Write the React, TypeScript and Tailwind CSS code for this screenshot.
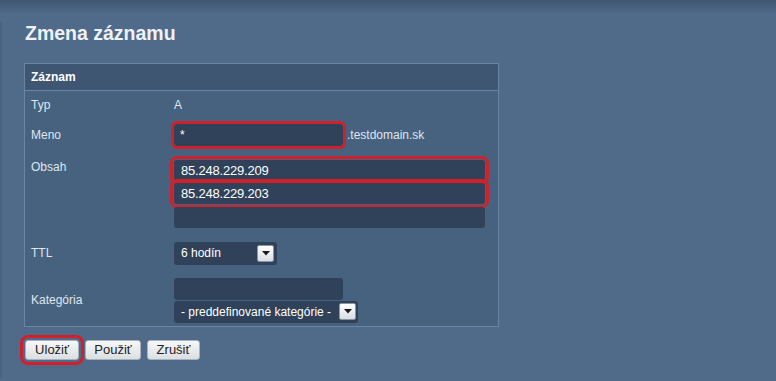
const field = "bg-[#2f4259] text-white rounded-[3px]";

const Arrow = () => {
  return (
    <span className="flex h-[17px] w-[17px] items-center justify-center rounded-[2px] border border-[#8a96a4] bg-gradient-to-b from-[#ffffff] to-[#d9dde2]">
      <svg width="8" height="5" viewBox="0 0 8 5">
        <path d="M0 0 L8 0 L4 4.5 Z" fill="#1b1b1b" />
      </svg>
    </span>
  );
};

const Row = ({ label, h, children, top }: { label: string; h: string; children?: React.ReactNode; top?: boolean }) => {
  return (
    <div className={`flex ${h} ${top ? "items-start pt-[10px]" : "items-center"}`}>
      <div className="w-[149px] pl-[6px] text-[12px] leading-[14px] text-[#dfe6ee]">{label}</div>
      <div className="flex flex-col">{children}</div>
    </div>
  );
};

const App = () => {
  return (
    <div className="h-[381px] w-[776px] overflow-hidden bg-[linear-gradient(to_bottom,#3f5670_0px,#4f6b89_14px)] font-['Liberation_Sans',Arial,sans-serif]">
      <div className="mt-[25px] h-[356px] border-l-2 border-[#486381] pl-[22px]">
        <h1 className="-mt-[3px] pl-px text-[19.5px] font-bold leading-[22px] text-[#eef2f7]">Zmena záznamu</h1>

        {/* panel */}
        <div className="mt-[19px] w-[475px] border border-[#6885a3] bg-[#47627f]">
          <div className="flex h-[27px] items-center border-b border-[#6885a3] bg-[#3e5672] pl-[6px] text-[12px] font-bold text-white">
            Záznam
          </div>

          <Row label="Typ" h="h-[28px]">
            <span className="text-[12px] text-[#dfe6ee]">A</span>
          </Row>

          <Row label="Meno" h="h-[31px]">
            <div className="flex items-center">
              <div className={`${field} h-[22px] w-[169px] rounded-[2px] pl-[6px] text-[12px] leading-[22px] outline-[3px] outline-solid outline-offset-[0px] outline-[#d0212b]`}>
                *
              </div>
              <span className="ml-[4px] text-[12px] text-[#dfe6ee]">.testdomain.sk</span>
            </div>
          </Row>

          <Row label="Obsah" h="h-[82px]" top>
            <div className="flex flex-col gap-[2px]">
              <div className={`${field} h-[21px] w-[311px] pl-[7px] text-[13px] leading-[21px] tracking-[-0.2px] outline-[3px] outline-solid outline-offset-[1px] outline-[#d0212b]`}>
                85.248.229.209
              </div>
              <div className={`${field} h-[21px] w-[311px] pl-[7px] text-[13px] leading-[21px] tracking-[-0.2px] outline-[3px] outline-solid outline-offset-[1px] outline-[#d0212b]`}>
                85.248.229.203
              </div>
              <div className={`${field} mt-[1px] h-[21px] w-[311px]`}></div>
            </div>
          </Row>

          <Row label="TTL" h="h-[42px]">
            <div className={`${field} flex h-[23px] w-[103px] items-center justify-between pl-[7px] pr-[3px] text-[12px]`}>
              <span>6 hodín</span>
              <Arrow />
            </div>
          </Row>

          <Row label="Kategória" h="h-[52px]">
            <div className={`${field} h-[22px] w-[169px]`}></div>
            <div className={`${field} mt-[1px] flex h-[22px] w-[184px] items-center justify-between pl-[7px] pr-[2px] text-[12px]`}>
              <span>- preddefinované kategórie -</span>
              <Arrow />
            </div>
          </Row>
        </div>

        {/* buttons */}
        <div className="ml-px mt-[13px] flex gap-[6px]">
          <button className="h-[20px] w-[54px] rounded-[3px] border border-[#a9b2bc] bg-gradient-to-b from-[#f7f7f7] to-[#dcdfe2] text-[13px] leading-[18px] text-[#222] outline-[3px] outline-solid outline-offset-[2px] outline-[#d0212b]">
            Uložiť
          </button>
          <button className="h-[20px] w-[56px] rounded-[3px] border border-[#a9b2bc] bg-gradient-to-b from-[#f7f7f7] to-[#dcdfe2] text-[13px] leading-[18px] text-[#222]">
            Použiť
          </button>
          <button className="h-[20px] w-[53px] rounded-[3px] border border-[#a9b2bc] bg-gradient-to-b from-[#f7f7f7] to-[#dcdfe2] text-[13px] leading-[18px] text-[#222]">
            Zrušiť
          </button>
        </div>
      </div>
    </div>
  );
};

export default App;
